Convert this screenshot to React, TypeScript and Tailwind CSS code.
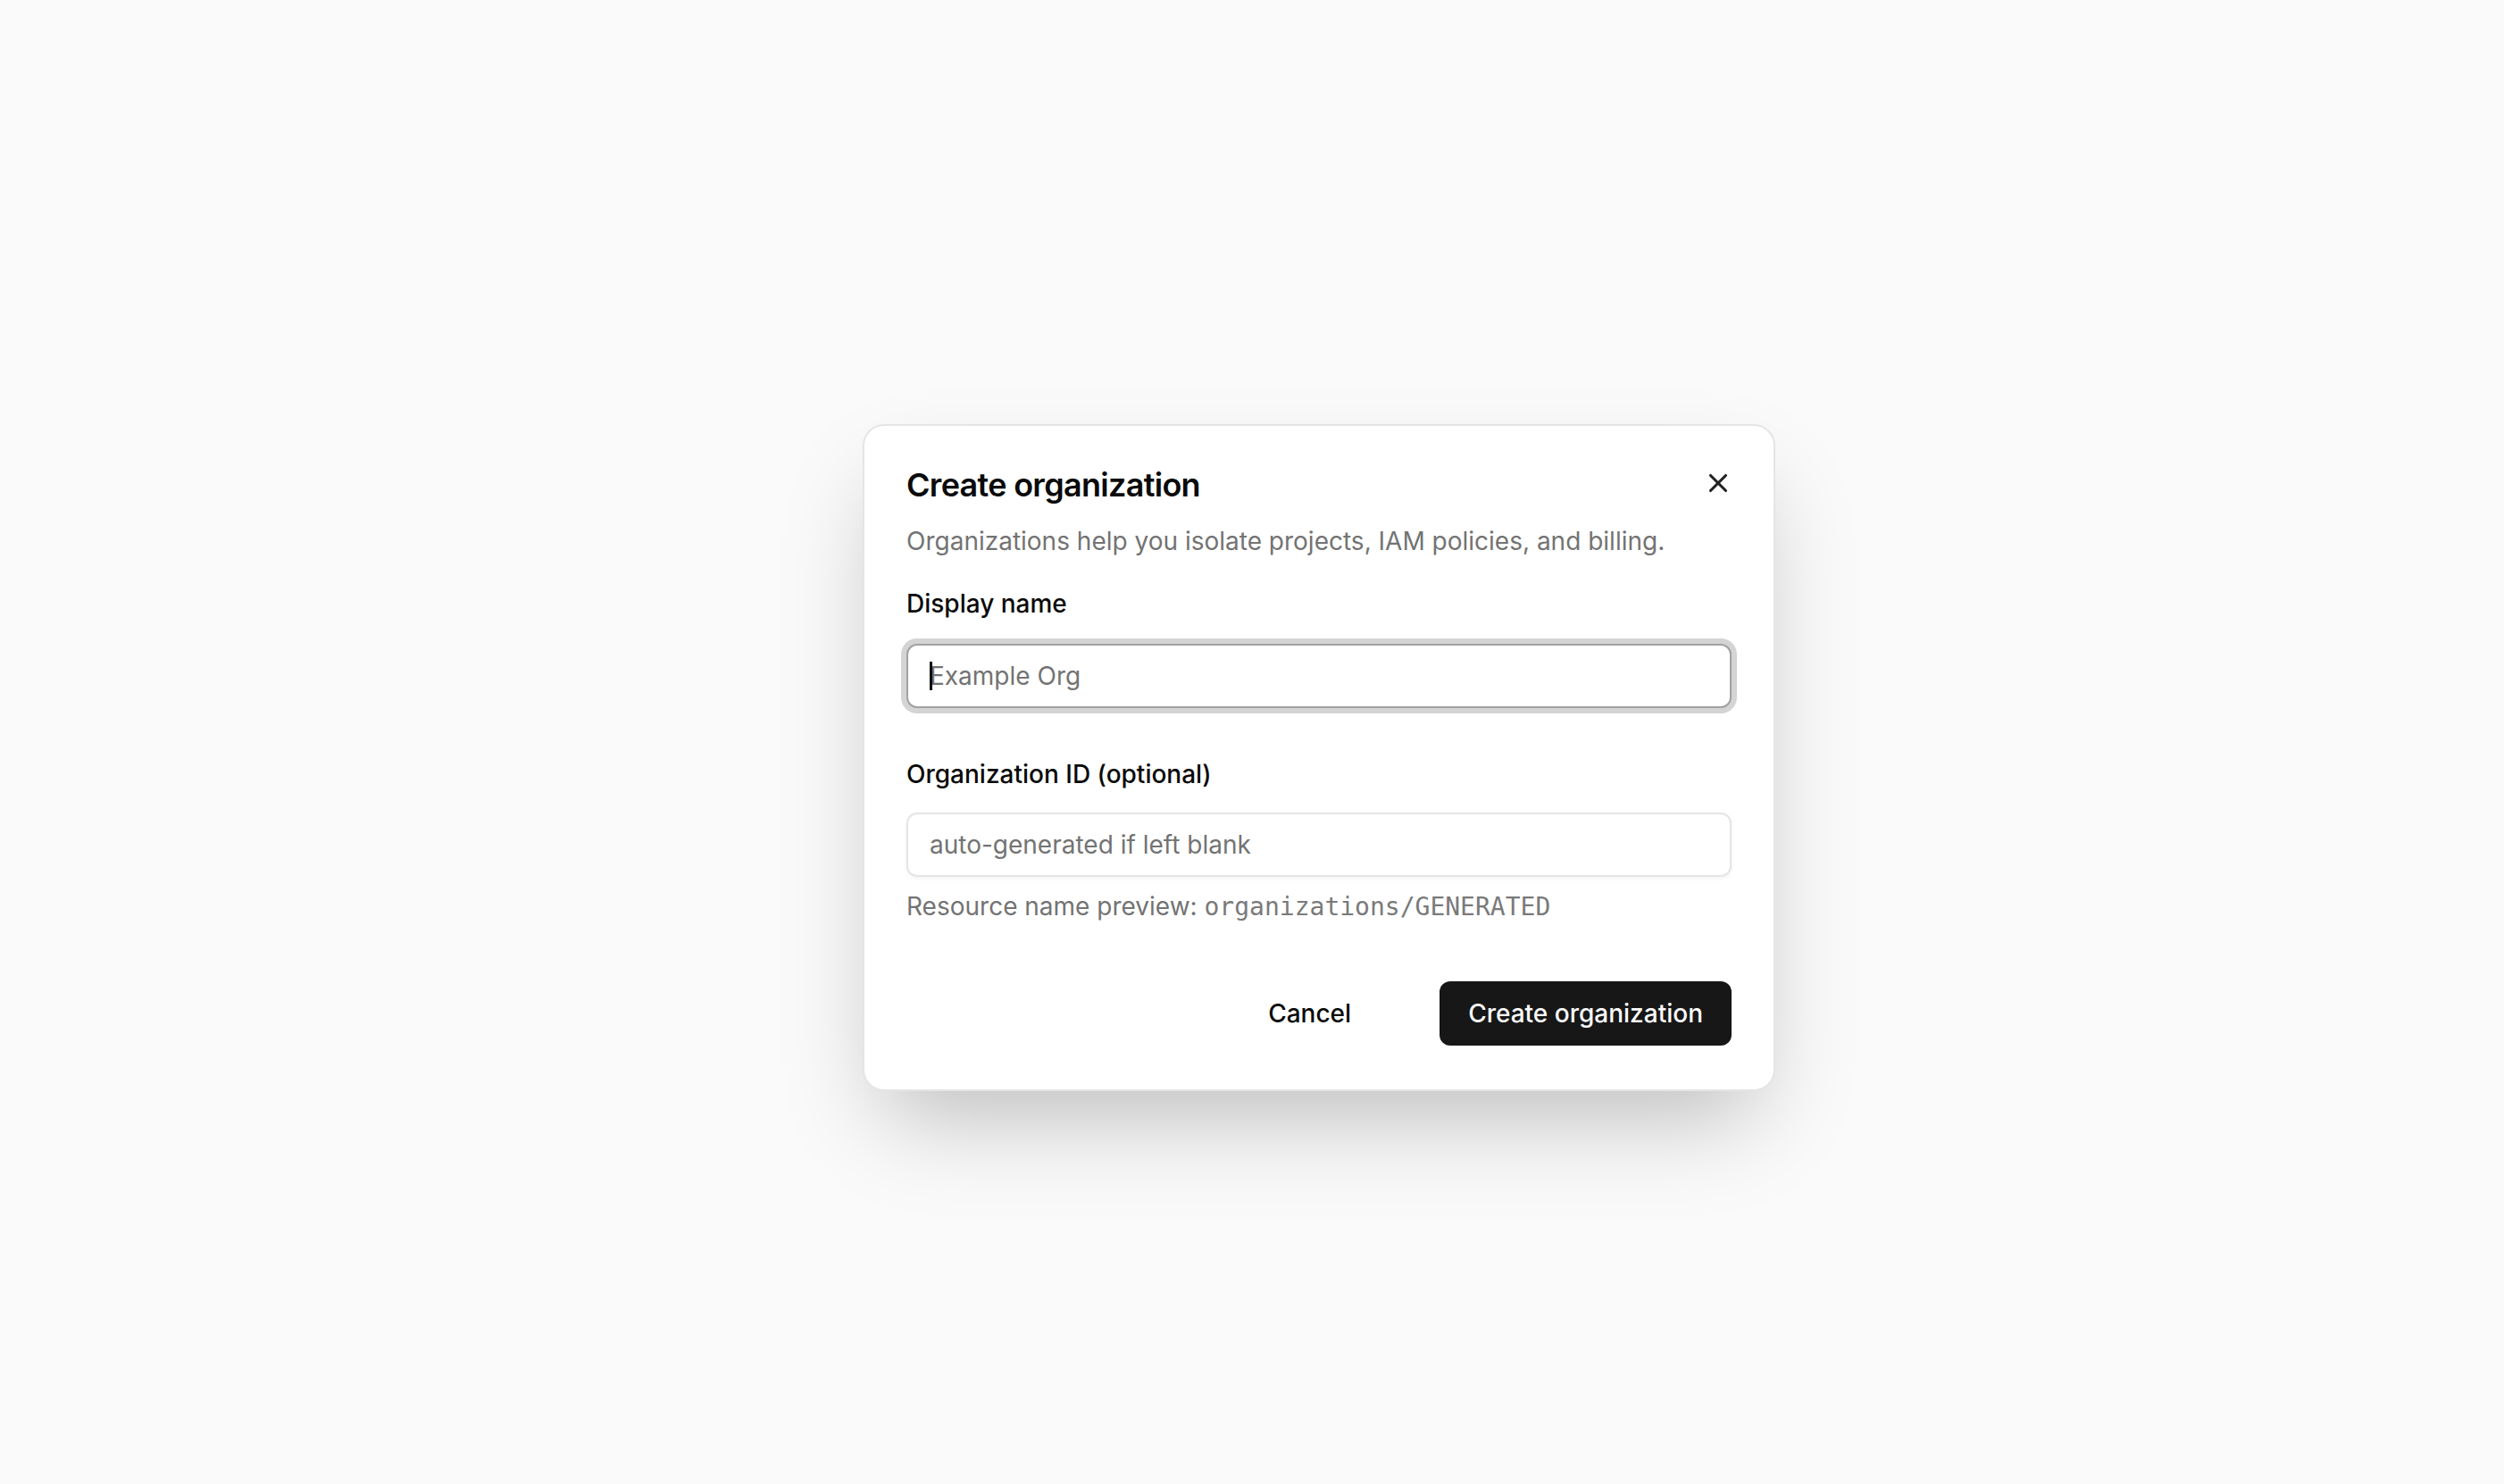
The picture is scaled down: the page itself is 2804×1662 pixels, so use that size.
import { X } from 'lucide-react'

// Everything here is drawn at twice the usual size (the reference is a 2x capture).

function Field({
  label,
  placeholder,
  focused,
}: {
  label: string
  placeholder: string
  focused?: boolean
}) {
  return (
    <div className="flex flex-col">
      <label className="text-[28px] leading-[40px] font-medium text-[#0a0a0a]">{label}</label>
      <div className={`relative ${focused ? 'mt-[25px]' : 'mt-[23px]'}`}>
        <input
          readOnly
          placeholder={placeholder}
          className={`w-full h-[72px] rounded-[12px] bg-white px-[24px] text-[28px] text-[#0a0a0a] placeholder:text-[#737373] outline-none ${
            focused
              ? 'border-2 border-[#a1a1a1] ring-[6px] ring-[#d4d4d4]'
              : 'border-2 border-[#e5e5e5] shadow-[0_2px_4px_rgba(0,0,0,0.05)]'
          }`}
        />
        {focused && (
          <span className="absolute left-[26px] top-[20px] h-[32px] w-[3px] bg-[#0a0a0a]" />
        )}
      </div>
    </div>
  )
}

export default function App() {
  return (
    <div
      className="min-h-screen w-full bg-[#fafafa] flex justify-center pt-[475px] pl-[150px]"
      style={{ fontFamily: 'Inter, "Noto Sans", sans-serif' }}
    >
      <div className="w-[1022px] h-[747px] rounded-[24px] border-2 border-[#e5e5e5] bg-white px-[47px] pt-[46px] shadow-[0_50px_100px_-24px_rgba(0,0,0,0.25)] flex flex-col">
        {/* Header */}
        <div className="flex items-start justify-between">
          <h2 className="text-[36px] leading-[40px] font-semibold tracking-[-0.7px] text-[#0a0a0a]">
            Create organization
          </h2>
          <button className="mt-[1px] -mr-[2px] text-[#0a0a0a] opacity-90">
            <X size={34} strokeWidth={2.2} />
          </button>
        </div>
        <p className="mt-[23px] text-[28px] leading-[40px] text-[#737373]">
          Organizations help you isolate projects, IAM policies, and billing.
        </p>

        {/* Fields */}
        <div className="mt-[30px]">
          <Field label="Display name" placeholder="Example Org" focused />
        </div>
        <div className="mt-[54px]">
          <Field label="Organization ID (optional)" placeholder="auto-generated if left blank" />
        </div>
        <p className="mt-[13px] text-[28px] leading-[40px] text-[#737373]">
          Resource name preview:{' '}
          <span className="text-[28px] text-[#7a7a7a]" style={{ fontFamily: '"DejaVu Sans Mono", monospace' }}>
            organizations/GENERATED
          </span>
        </p>

        {/* Footer */}
        <div className="mt-[63px] flex justify-end items-center gap-[67px]">
          <button className="h-[72px] px-[32px] rounded-[12px] text-[28px] font-medium text-[#0a0a0a]">
            Cancel
          </button>
          <button className="h-[72px] px-[32px] rounded-[12px] bg-[#171717] text-[28px] font-medium text-[#fafafa]">
            Create organization
          </button>
        </div>
      </div>
    </div>
  )
}
